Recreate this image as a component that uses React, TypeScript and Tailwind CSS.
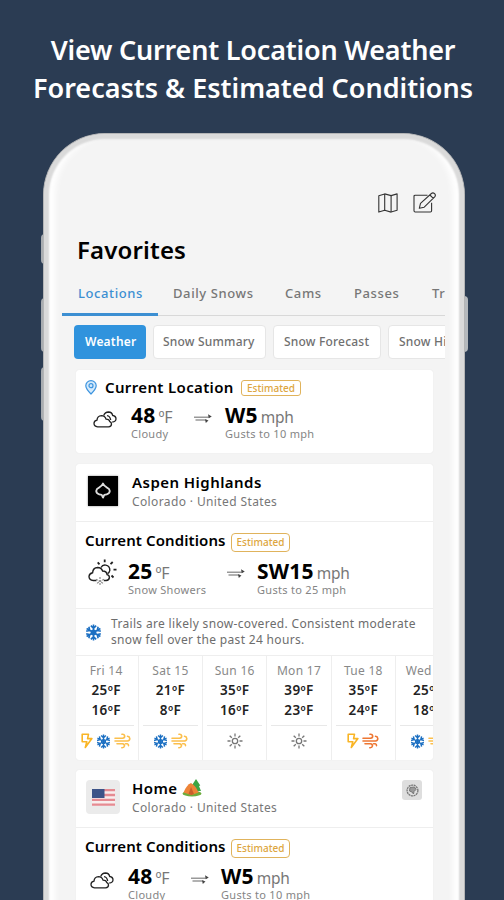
import type { ReactNode } from "react";
import clsx from "clsx";

type HazardKind = "bolt" | "snow" | "wind" | "windHigh" | "sun";

const TABS = [
  { label: "Locations", className: "w-24 pl-4 text-[#3c8fd2]" },
  { label: "Daily Snows", className: "w-[111px] pl-[15px]" },
  { label: "Cams", className: "w-[69px] pl-4" },
  { label: "Passes", className: "w-[78px] pl-4" },
  { label: "Trips", className: "w-[60px] pl-4" }
];

const PILLS = [
  { label: "Weather", className: "w-[72px] bg-[#3093dd] pl-[11px] font-semibold text-white" },
  { label: "Snow Summary", className: "w-[113px] border border-[#e6e6e6] bg-white pl-[9px] text-[#707070]" },
  { label: "Snow Forecast", className: "w-[108px] border border-[#e6e6e6] bg-white pl-[10px] text-[#707070]" },
  { label: "Snow History", className: "w-[104px] border border-[#e6e6e6] bg-white pl-[10px] text-[#707070]" }
];

const DAYS: { day: string; high: string; low: string; hazards: HazardKind[] }[] = [
  { day: "Fri 14", high: "25ºF", low: "16ºF", hazards: ["bolt", "snow", "wind"] },
  { day: "Sat 15", high: "21ºF", low: "8ºF", hazards: ["snow", "wind"] },
  { day: "Sun 16", high: "35ºF", low: "16ºF", hazards: ["sun"] },
  { day: "Mon 17", high: "39ºF", low: "23ºF", hazards: ["sun"] },
  { day: "Tue 18", high: "35ºF", low: "24ºF", hazards: ["bolt", "windHigh"] },
  { day: "Wed 19", high: "25ºF", low: "18ºF", hazards: ["snow", "wind"] }
];

function MapIcon() {
  return (
    <svg width="20" height="20" viewBox="0 0 20 20" fill="none" stroke="#333" strokeWidth="1.1" strokeLinejoin="round">
      <path d="M.8 2.8 6.7.9l6.4 1.7 6-1.7v16.3l-6 1.9-6.4-1.9-5.9 1.9z" />
      <path d="M6.7.9v16.3M13.1 2.6v16.5" />
    </svg>
  );
}

function EditIcon() {
  return (
    <svg width="24" height="21" viewBox="0 0 24 21" fill="none" stroke="#333" strokeWidth="1.1" strokeLinejoin="round">
      <path d="M14.5 3.2H2.2Q1 3.2 1 4.4v14.4Q1 20 2.2 20h15.2q1.2 0 1.2-1.2v-8" />
      <path d="m6.3 16.3 1.2-5L18.4 1.5q1.6-1.3 3.2.2 1.5 1.6.1 3.2L11.2 15.2zM16.9 3l3.4 3.4" />
    </svg>
  );
}

function PinIcon() {
  return (
    <svg width="12" height="15" viewBox="0 0 12 15" fill="none" stroke="#3c94df" strokeWidth="1.2">
      <path d="M6 14Q.8 8.7.8 5.7A5.2 5 0 0 1 11.2 5.7Q11.2 8.7 6 14z" fill="#d5eafb" />
      <circle cx="6" cy="5.7" r="2" />
    </svg>
  );
}

function CloudyIcon() {
  return (
    <svg width="24" height="17" viewBox="0 0 24 17" fill="none" stroke="#222" strokeWidth="1.3" strokeLinejoin="round">
      <path d="M4.6 15.8Q1 15.5 1 12.3q0-2.5 3-3.200.3-4.300 4.500-4.500 3.400 0 4.600 3.600 3.200.2 3.700 2.500 1.700.6 1.700 2.300 0 2.800-3 2.800z" />
      <path d="M10.700 4.400Q12 1 15.500 1q3.500.2 4.200 3.500 3.300.5 3.300 3.500-.2 2.800-3.700 3M14 4.600q3 .3 3.700 4.400" />
    </svg>
  );
}

function SnowShowersIcon() {
  return (
    <svg width="29" height="28" viewBox="0 0 29 28" fill="none" stroke="#222" strokeWidth="1.4">
      <path d="M8.500 21.500H5.300Q1 21 1 17.500q.2-3 3.600-3.800.4-5 5-5.200 3.800 0 5 3.500 4 0 4.500 3.600 2.400.7 2.300 3-.3 2.600-3.200 2.900h-2.400" />
      <path d="M13 8.500q1.600-3 4.800-2.400 4.200 1 4 5.200-.4 2.300-2.300 3.400" />
      <path d="M16.700.5v2.700M9.700 3.300l1.800 2M24.700 3l-2.200 2.200M25.500 10.700h3M23.500 16.500l2 2" strokeWidth="1.8" />
      <path d="m12 18 0 9M8 20.300l8 4.500M16 20.300l-8 4.500" stroke="#8a8a8a" strokeWidth="1.2" strokeDasharray="2 1" />
    </svg>
  );
}

function WindArrowIcon() {
  return (
    <svg width="19" height="11" viewBox="0 0 19 11" fill="none">
      <path d="M0 4.300h15M1.500 7h11" stroke="#999" strokeWidth="1.6" />
      <path d="M14 1.200 17.800 3.400 14.800 5.200zM11 6.300l3.500 1.300-2.700 2.400z" fill="#444" />
    </svg>
  );
}

function SnowflakeIcon({ size }: { size: number }) {
  return (
    <svg width={size} height={size} viewBox="0 0 16 16" fill="none" stroke="#1b6fc2" strokeWidth="1.5">
      {[0, 60, 120, 180, 240, 300].map((angle) => (
        <path key={angle} transform={`rotate(${angle} 8 8)`} d="M8 8V.5M5.500 1.500 8 4l2.500-2.500" />
      ))}
      <circle cx="8" cy="8" r="2" />
    </svg>
  );
}

function WindIcon({ color }: { color: string }) {
  return (
    <svg width="17" height="16" viewBox="0 0 17 16" fill="none" stroke={color} strokeWidth="1.6" strokeLinecap="round">
      <path d="M1 5.300h7.500q2.300-.3 2.200-2.300Q10.300 1 8 1.300" />
      <path d="M1 8h12.500q2.300-.3 2.300-2.500-.2-2-2.300-2.200" />
      <path d="M3 10.700h5.500q2 .3 2 2.200-.4 2-2.700 1.800M11.500 10.700h1.700q1.500.4 1.300 1.900" />
    </svg>
  );
}

function BoltIcon() {
  return (
    <svg width="12" height="16" viewBox="0 0 12 16" fill="none" stroke="#f9b526" strokeWidth="1.6" strokeLinejoin="round">
      <path d="M1.200 1.200H7.500L6.600 5.600h4.300L4.300 14.500l1.500-5.800H1.200z" />
    </svg>
  );
}

function SunIcon() {
  return (
    <svg width="16" height="16" viewBox="0 0 16 16" fill="none" stroke="#777" strokeWidth="1.3">
      <circle cx="8" cy="8" r="2.700" />
      {[0, 45, 90, 135, 180, 225, 270, 315].map((angle) => (
        <path key={angle} transform={`rotate(${angle} 8 8)`} d="M8 .5v3" />
      ))}
    </svg>
  );
}

function FlagIcon() {
  return (
    <svg width="23" height="17" viewBox="0 0 23 17">
      <rect width="23" height="17" fill="#f8eeee" />
      <path d="M0 1.200h23M0 6h23M0 10.800h23M0 15.700h23" stroke="#e58b92" strokeWidth="2.3" />
      <rect width="12.500" height="9" fill="#3d5488" />
    </svg>
  );
}

function CampingIcon() {
  return (
    <svg width="20" height="18" viewBox="0 0 20 18">
      <path d="M14 0 9.500 7l1.700.3L9 12h10l-2-5 1.300-.5z" fill="#3da544" />
      <ellipse cx="10" cy="14.500" rx="9.500" ry="3" fill="#6dac3c" />
      <path d="M1.500 13.500Q4.500 6 9 4q5 3 7.500 9.500L9.500 16z" fill="#ee8438" />
      <path d="M6.500 15 9 8l3 7-2.500 1z" fill="#c95f2b" />
    </svg>
  );
}

function BadgeIcon() {
  return (
    <svg width="13" height="13" viewBox="0 0 13 13" fill="none" stroke="#777">
      <circle cx="6.500" cy="6.500" r="5.400" strokeWidth="1.3" strokeDasharray="2 .6" />
      <path d="M4 3.500 8.500 3 10 5.500 8 7.500 7.500 10 6 8 3.500 7z" fill="#999" />
    </svg>
  );
}

function HazardIcon({ kind }: { kind: HazardKind }) {
  if (kind === "bolt") return <BoltIcon />;
  if (kind === "snow") return <SnowflakeIcon size={15} />;
  if (kind === "sun") return <SunIcon />;
  return <WindIcon color={kind === "windHigh" ? "#ee7733" : "#fbbf4c"} />;
}

function EstimatedBadge({ className }: { className: string }) {
  return (
    <span
      className={clsx(
        "flex shrink-0 items-center justify-center border border-[#e0b35c] text-[10px] font-medium text-[#dda640]",
        className
      )}
    >
      Estimated
    </span>
  );
}

function Reading({
  value,
  unit,
  detail,
  className
}: {
  value: string;
  unit: ReactNode;
  detail: string;
  className: string;
}) {
  return (
    <div className={clsx("shrink-0 whitespace-nowrap", className)}>
      <p className="flex h-6 items-baseline text-[21px] leading-6 font-bold tracking-[0.2px] text-black">
        {value}
        {unit}
      </p>
      <p className="text-[11px] leading-[14px] tracking-[0.3px] text-[#858585]">{detail}</p>
    </div>
  );
}

function Degrees() {
  return <span className="ml-[3px] text-[16px] font-normal tracking-[-0.2px] text-[#777]">ºF</span>;
}

function Mph() {
  return <span className="ml-[3px] text-[15.5px] font-normal tracking-[-0.3px] text-[#777]">mph</span>;
}

function LocationHeader({ logo, name, badge }: { logo: ReactNode; name: ReactNode; badge?: ReactNode }) {
  return (
    <div className="flex h-[58px] border-b border-[#eee] pl-2.5">
      <div className="flex h-[54px] w-[34px] items-center justify-center">{logo}</div>
      <div className="ml-3 pt-[7px]">
        <h2 className="flex h-[22px] items-center gap-1 text-[15px] leading-[22px] font-semibold tracking-[0.45px] text-black">
          {name}
        </h2>
        <p className="text-[12px] leading-[17px] tracking-[0.38px] text-[#777]">Colorado · United States</p>
      </div>
      {badge}
    </div>
  );
}

function ConditionsTitle() {
  return (
    <div className="flex h-5 items-center pl-[9px]">
      <h3 className="w-[146px] text-[15px] font-semibold tracking-[0.1px] whitespace-nowrap text-black">Current Conditions</h3>
      <EstimatedBadge className="mt-1 h-[19px] w-[59px] rounded-[4px]" />
    </div>
  );
}

function DayColumn({ day, high, low, hazards }: (typeof DAYS)[number]) {
  return (
    <div className="w-[64.3px] shrink-0 border-r border-[#eee] px-1.5 text-center">
      <p className="pt-1.5 text-[12px] leading-[18px] tracking-[0.3px] text-[#888]">{day}</p>
      <p className="text-[13.5px] leading-5 font-semibold tracking-[0.4px] text-[#222]">{high}</p>
      <p className="text-[13.5px] leading-5 font-semibold tracking-[0.4px] text-[#222]">{low}</p>
      <div className="-mx-0.5 mt-[5px] flex h-[31px] items-center justify-center gap-[3px] border-t border-[#e8e8e8]">
        {hazards.map((kind) => (
          <HazardIcon key={kind} kind={kind} />
        ))}
      </div>
    </div>
  );
}

function CurrentLocationCard() {
  return (
    <section className="ml-3.5 h-[83px] w-[357px] rounded-[3px] bg-white pt-[7px] shadow-[0_0_1px_#ddd]">
      <div className="flex h-5 items-center pl-[9px]">
        <PinIcon />
        <h2 className="ml-2 w-[136px] text-[15px] font-semibold tracking-[0.35px] whitespace-nowrap text-black">Current Location</h2>
        <EstimatedBadge className="mt-0.5 h-4 w-[60px] rounded-[3px]" />
      </div>
      <div className="flex pt-[6px] pl-[17px]">
        <div className="w-[38px] pt-2">
          <CloudyIcon />
        </div>
        <Reading value="48" unit={<Degrees />} detail="Cloudy" className="w-[63px]" />
        <div className="w-[31px] pt-[10px]">
          <WindArrowIcon />
        </div>
        <Reading value="W5" unit={<Mph />} detail="Gusts to 10 mph" className="w-28" />
      </div>
    </section>
  );
}

function AspenCard() {
  return (
    <section className="mt-[11px] ml-3.5 h-[296px] w-[357px] overflow-hidden rounded-[3px] bg-white shadow-[0_0_1px_#ddd]">
      <LocationHeader
        name="Aspen Highlands"
        logo={
          <div className="flex h-[30px] w-[30px] items-center justify-center bg-black shadow-[0_0_2px_#888]">
            <svg width="18" height="18" viewBox="0 0 18 18" fill="none" stroke="#ddd" strokeWidth="1.9" strokeLinejoin="round">
              <path d="M9 1.500q1.200 2.800 4 4.200 2.600 1.200 2.800 3.300-.3 2.600-3 3.300l-2.500.6L9 15.500l-1.300-2.600-2.500-.6q-2.700-.7-3-3.300.2-2.100 2.800-3.300Q7.800 4.300 9 1.500z" />
            </svg>
          </div>
        }
      />
      <div className="h-[87px] border-b border-[#eee] pt-2">
        <ConditionsTitle />
        <div className="flex pt-[9px] pl-3">
          <div className="w-10">
            <SnowShowersIcon />
          </div>
          <Reading value="25" unit={<Degrees />} detail="Snow Showers" className="w-[99px]" />
          <div className="w-[30px] pt-[9px]">
            <WindArrowIcon />
          </div>
          <Reading value="SW15" unit={<Mph />} detail="Gusts to 25 mph" className="w-28" />
        </div>
      </div>
      <div className="flex h-[47px] items-center border-b border-[#eee] pl-[9px]">
        <SnowflakeIcon size={17} />
        <p className="ml-[9px] text-[12px] leading-4 tracking-[0.33px] whitespace-nowrap text-[#6d6d6d]">
          Trails are likely snow-covered. Consistent moderate
          <br />
          snow fell over the past 24 hours.
        </p>
      </div>
      <div className="-ml-[1.5px] flex h-[104px]">
        {DAYS.map((day) => (
          <DayColumn key={day.day} {...day} />
        ))}
      </div>
    </section>
  );
}

function HomeCard() {
  return (
    <section className="mt-2.5 ml-3.5 h-[150px] w-[357px] rounded-[3px] bg-white shadow-[0_0_1px_#ddd]">
      <LocationHeader
        name={
          <>
            Home <CampingIcon />
          </>
        }
        logo={
          <div className="flex h-[34px] w-[34px] items-center justify-center rounded-[4px] bg-[#ebebeb]">
            <FlagIcon />
          </div>
        }
        badge={
          <div className="mt-[10px] mr-[11px] ml-auto flex h-5 w-5 items-center justify-center rounded-[3px] bg-[#dedede]">
            <BadgeIcon />
          </div>
        }
      />
      <div className="pt-2">
        <ConditionsTitle />
        <div className="flex pt-2 pl-3.5">
          <div className="w-[38px] pt-2">
            <CloudyIcon />
          </div>
          <Reading value="48" unit={<Degrees />} detail="Cloudy" className="w-[63px]" />
          <div className="w-[30px] pt-[10px]">
            <WindArrowIcon />
          </div>
          <Reading value="W5" unit={<Mph />} detail="Gusts to 10 mph" className="w-28" />
        </div>
      </div>
    </section>
  );
}

function Screen() {
  return (
    <div className="w-[383px] overflow-hidden">
      <div className="flex h-[78px] items-end justify-end gap-[15px] pr-2 pb-1">
        <MapIcon />
        <EditIcon />
      </div>
      <h1 className="mt-[15px] ml-[15px] text-2xl leading-[36px] font-semibold tracking-[0.15px] text-black">Favorites</h1>
      <nav className="mt-3 flex h-[36px] border-b border-[#d8d8d8] text-[13px] font-medium tracking-[0.6px] text-[#777]">
        {TABS.map((tab, index) => (
          <div
            key={tab.label}
            className={clsx("h-9 shrink-0 pt-px leading-6 whitespace-nowrap", tab.className, index === 0 && "border-b-[3px] border-[#3c8fd2]")}
          >
            {tab.label}
          </div>
        ))}
      </nav>
      <div className="mt-[9px] ml-3 flex gap-[7px]">
        {PILLS.map((pill) => (
          <button
            key={pill.label}
            className={clsx("h-[34px] shrink-0 rounded-[4px] text-left text-[12px] font-medium tracking-[0.2px] whitespace-nowrap", pill.className)}
          >
            {pill.label}
          </button>
        ))}
      </div>
      <div className="pt-[11px]">
        <CurrentLocationCard />
        <AspenCard />
        <HomeCard />
      </div>
    </div>
  );
}

export default function App() {
  return (
    <main className="relative h-[900px] w-[504px] overflow-hidden bg-[#2b3c53] font-['Noto_Sans',sans-serif]">
      <h1 className="pt-[31px] pl-0.5 text-center text-[27px] leading-[38px] font-semibold text-white">
        <span className="tracking-[-0.2px]">View Current Location Weather</span>
        <br />
        Forecasts &amp; Estimated Conditions
      </h1>
      <i className="absolute top-[234px] left-[41px] h-[30px] w-2 rounded-sm bg-[#a9adb1]" />
      <i className="absolute top-[298px] left-[41px] h-[54px] w-2 rounded-sm bg-[#a9adb1]" />
      <i className="absolute top-[367px] left-[41px] h-[54px] w-2 rounded-sm bg-[#a9adb1]" />
      <i className="absolute top-[296px] left-[460px] h-[56px] w-2 rounded-sm bg-[#b5b9bd]" />
      <div className="relative mt-[26px] ml-[43px] h-[830px] w-[422px] rounded-t-[62px] border border-b-0 border-[#b4b5b6] bg-[#f4f4f4] pt-[5px] pl-[18px] shadow-[inset_0_0_2px_5px_#dadada,inset_11px_0_6px_#fff,inset_-11px_0_6px_#fff]">
        <Screen />
      </div>
    </main>
  );
}
